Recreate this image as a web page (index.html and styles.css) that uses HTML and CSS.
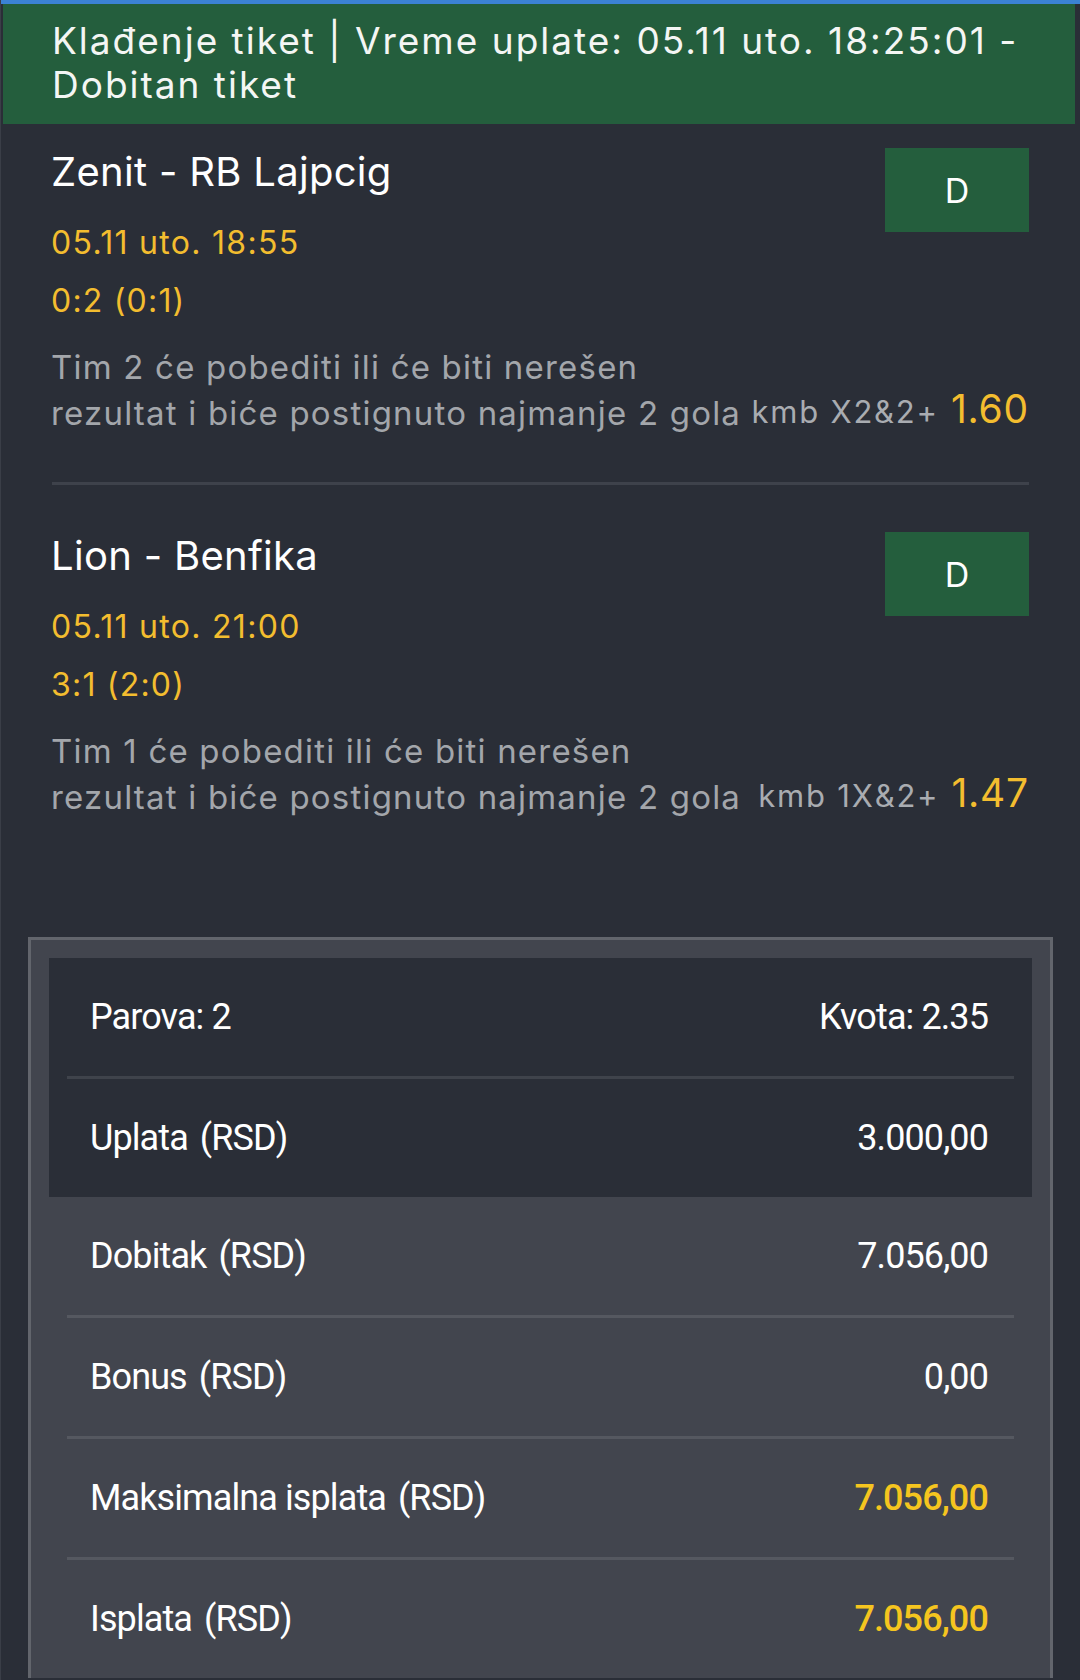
FILE: index.html
```html
<!DOCTYPE html>
<html lang="sr">
<head>
<meta charset="utf-8">
<title>Klađenje tiket</title>
<link rel="stylesheet" href="styles.css">
</head>
<body>
<div class="topbar"></div>
<div class="ticket-head">Klađenje tiket | Vreme uplate: 05.11 uto. 18:25:01 - Dobitan tiket</div>

<div class="match">
  <div class="match-top">
    <div class="match-info">
      <div class="teams">Zenit - RB Lajpcig</div>
      <div class="date">05.11 uto. 18:55</div>
      <div class="score">0:2 (0:1)</div>
    </div>
    <div class="status">D</div>
  </div>
  <div class="match-bottom">
    <div class="desc">Tim 2 će pobediti ili će biti nerešen rezultat i biće postignuto najmanje 2 gola</div>
    <div class="pick"><span class="market">kmb X2&amp;2+</span><span class="odd">1.60</span></div>
  </div>
</div>
<div class="divider"></div>
<div class="match">
  <div class="match-top">
    <div class="match-info">
      <div class="teams">Lion - Benfika</div>
      <div class="date">05.11 uto. 21:00</div>
      <div class="score">3:1 (2:0)</div>
    </div>
    <div class="status">D</div>
  </div>
  <div class="match-bottom">
    <div class="desc">Tim 1 će pobediti ili će biti nerešen rezultat i biće postignuto najmanje 2 gola</div>
    <div class="pick"><span class="market">kmb 1X&amp;2+</span><span class="odd">1.47</span></div>
  </div>
</div>

<div class="summary">
  <div class="summary-dark">
    <div class="row"><span class="label">Parova: 2</span><span class="value">Kvota: 2.35</span></div>
    <div class="row"><span class="label">Uplata<span class="unit">(RSD)</span></span><span class="value">3.000,00</span></div>
  </div>
  <div class="summary-light">
    <div class="row"><span class="label">Dobitak<span class="unit">(RSD)</span></span><span class="value">7.056,00</span></div>
    <div class="row"><span class="label">Bonus<span class="unit">(RSD)</span></span><span class="value">0,00</span></div>
    <div class="row"><span class="label">Maksimalna isplata<span class="unit">(RSD)</span></span><span class="value gold">7.056,00</span></div>
    <div class="row"><span class="label">Isplata<span class="unit">(RSD)</span></span><span class="value gold">7.056,00</span></div>
  </div>
</div>
</body>
</html>
```

FILE: styles.css
```css
html, body {
  margin: 0;
  padding: 0;
}
body {
  background: #2a2e37;
  font-family: Inter, "Noto Sans", sans-serif;
  color: #ffffff;
  width: 1080px;
  min-height: 1680px;
  overflow: hidden;
  border-left: 1px solid #3a3e47;
  box-sizing: border-box;
}
.topbar {
  height: 4px;
  background: #3b82d4;
}
.ticket-head {
  margin: 0 5px 0 2px;
  background: #245e3d;
  padding: 15px 20px 17px 49px;
  font-size: 37px;
  line-height: 44px;
  letter-spacing: 2px;
  color: #f4f6f4;
}
.match {
  padding: 24px 51px 0 50px;
}
.match-top {
  display: flex;
  justify-content: space-between;
  align-items: flex-start;
}
.teams {
  font-size: 40px;
  line-height: 48px;
  letter-spacing: 0.3px;
  color: #ffffff;
}
.date {
  margin-top: 27px;
  font-size: 32px;
  line-height: 40px;
  letter-spacing: 1.3px;
  color: #f3bd2f;
}
.score {
  margin-top: 18px;
  font-size: 32px;
  line-height: 40px;
  letter-spacing: 1.2px;
  color: #f3bd2f;
}
.status {
  width: 144px;
  height: 84px;
  background: #245e3d;
  display: flex;
  align-items: center;
  justify-content: center;
  font-size: 34px;
  color: #ffffff;
}
.match-bottom {
  margin-top: 23px;
  display: flex;
  align-items: flex-end;
  gap: 10px;
}
.desc {
  flex: 1;
  font-size: 33px;
  line-height: 46px;
  letter-spacing: 1.2px;
  color: #a3a6ab;
}
.pick {
  display: flex;
  align-items: baseline;
  gap: 12px;
  margin-bottom: 4px;
  white-space: nowrap;
}
.market {
  font-size: 31px;
  letter-spacing: 1.8px;
  color: #a9acb1;
}
.odd {
  font-size: 39px;
  letter-spacing: 0.8px;
  color: #f3bd2f;
}
.divider {
  margin: 46px 51px 23px 51px;
  height: 3px;
  background: #3e424b;
}
.summary {
  margin: 117px 27px 0 27px;
  border: 3px solid #62656c;
  border-bottom: none;
  background: #42454e;
  padding: 18px 18px 0 18px;
  font-family: Roboto, "Liberation Sans", sans-serif;
}
.summary-dark {
  background: #2a2e37;
  padding: 0 18px;
}
.summary-light {
  padding: 0 18px;
}
.row {
  height: 118px;
  padding: 0 26px 0 23px;
  display: flex;
  justify-content: space-between;
  align-items: center;
  font-size: 36px;
  letter-spacing: -0.9px;
  color: #ffffff;
}
.summary-dark .row + .row {
  border-top: 3px solid #3f434b;
}
.summary-light .row + .row {
  border-top: 3px solid #555860;
}
.unit {
  margin-left: 12px;
}
.gold {
  color: #f5c51f;
  font-weight: 500;
}
```
